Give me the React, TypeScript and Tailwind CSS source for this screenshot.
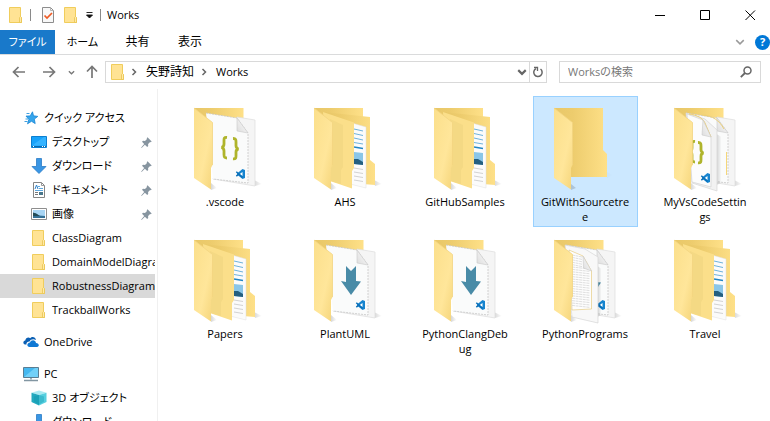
import React, { useId, useState } from "react";

type FolderKind = "empty" | "nested" | "braces" | "bracesStack" | "arrow" | "scriptStack";

/* ---------- small icons ---------- */

function SmallFolder() {
  return (
    <svg width="16" height="16" viewBox="0 0 16 16" className="shrink-0" aria-hidden="true">
      <path d="M1.500.5h11v9l1 1v5h-12z" fill="#ffe394" stroke="#f0cd5c" />
      <path d="M11.500 15.500v-5l1-1 1 1v5z" fill="#ffeaa8" stroke="#e9c451" strokeWidth=".8" />
    </svg>
  );
}

function CheckDoc() {
  return (
    <svg width="14" height="16" viewBox="0 0 14 16" aria-hidden="true">
      <path d="M1.500.5h8l3 3v12h-11z" fill="#f8f8f8" stroke="#8d8d8d" />
      <path d="M9.500.5v3h3" fill="none" stroke="#b5b5b5" />
      <path d="M3.500 8.500l2.500 2.500 5-5" fill="none" stroke="#ee5a24" strokeWidth="1.700" />
    </svg>
  );
}

function Chevron({ dir, className = "", w = 1.5 }: { dir: "right" | "down"; className?: string; w?: number }) {
  return (
    <svg width="8" height="8" viewBox="0 0 8 8" className={className} aria-hidden="true">
      <path d={dir === "right" ? "M2.500 1l3 3-3 3" : "M1 2.500l3 3 3-3"} fill="none" stroke="currentColor" strokeWidth={w} />
    </svg>
  );
}

function Arrow({ d }: { d: string }) {
  return (
    <svg width="14" height="14" viewBox="0 0 14 14" aria-hidden="true">
      <path d={d} fill="none" stroke="currentColor" strokeWidth="1.700" />
    </svg>
  );
}

function Pin() {
  return (
    <svg width="11" height="11" viewBox="0 0 11 11" className="shrink-0" aria-hidden="true">
      <path d="M6.500.3l4.200 4.200-1 .8-.6-.2-2 2 .1 2-1 .9-2.300-2.300L.6 10.900l-.4-.4 3-3.400L1 4.800l1-1 2 .2 2-2-.3-.8z" fill="#8795a0" />
    </svg>
  );
}

function QuickStar() {
  return (
    <svg width="16" height="16" viewBox="0 0 16 16" className="shrink-0" aria-hidden="true">
      <path d="M9.500 1.800l1 4 4.300.6-3.500 2.700.9 4.500-3.700-2.300-4 2.500 1.400-4.500L3 6.100l4.200-.2z" fill="#35a5ec" stroke="#1684d3" strokeWidth=".8" />
      <path d="M3.500 3.500h3M2.500 9h2.500M1.500 11.500h3" stroke="#3f9fdf" />
    </svg>
  );
}

function Desktop() {
  return (
    <svg width="16" height="16" viewBox="0 0 16 16" className="shrink-0" aria-hidden="true">
      <path d="M.5 2.500h15v11H.5z" fill="#17a2fa" stroke="#0c7fd0" />
      <path d="M1 11.500L13 3h2v8.500z" fill="#35b3ff" />
      <path d="M1 12.500h14" stroke="#0869b0" />
      <path d="M2 12.500h1M11 12.500h1M13 12.500h1" stroke="#fff" />
    </svg>
  );
}

function Download() {
  return (
    <svg width="16" height="16" viewBox="0 0 16 16" className="shrink-0" aria-hidden="true">
      <path d="M5.500.5h5v8h4.500L8 15.500 1 8.500h4.500z" fill="#3a96e4" stroke="#2b7cc6" strokeWidth=".8" />
    </svg>
  );
}

function DocumentIcon() {
  return (
    <svg width="16" height="16" viewBox="0 0 16 16" className="shrink-0" aria-hidden="true">
      <path d="M2.500.5h8l3 3v12h-11z" fill="#fff" stroke="#858585" />
      <path d="M10.500.5v3h3" fill="none" stroke="#999" />
      <path d="M7 4.500h2M8 6.500h4M4 8.500h8" stroke="#5ea8df" />
      <path d="M4 7l1.500-4L7 7" fill="none" stroke="#3083ca" />
      <path d="M4 10.500h3M4 12.500h3" stroke="#777" />
      <path d="M8 10h4v3H8z" fill="#48768b" />
    </svg>
  );
}

function PictureIcon() {
  return (
    <svg width="16" height="16" viewBox="0 0 16 16" className="shrink-0" aria-hidden="true">
      <path d="M.5 2.500h15v11H.5z" fill="#fff" stroke="#8e8e8e" />
      <path d="M2 4h12v8H2z" fill="#a8d5f4" />
      <path d="M2 7l3 .5 3 2 6 .5v2H2z" fill="#347096" />
      <path d="M2 6.500l3 1 4 2.500H2z" fill="#244c57" />
    </svg>
  );
}

function OneDrive() {
  return (
    <svg width="16" height="16" viewBox="0 0 16 16" className="shrink-0" aria-hidden="true">
      <path d="M3.500 10.500H2C-.2 10-.3 7 2.300 6.500 2.500 4 5.500 2.700 7.200 4.300 9 2 12.500 3 13 6 10 4.500 7.500 5.500 6.600 7.500 4.500 7.400 3.200 8.500 3.500 10.500z" fill="#0a5fb4" />
      <path d="M6.500 13C3.600 13 3.500 9 7 8.500 8 5.300 12.600 5.500 13 9c3 0 4 3.500 1 4z" fill="#0f78d4" />
    </svg>
  );
}

function PcIcon() {
  return (
    <svg width="16" height="16" viewBox="0 0 16 16" className="shrink-0" aria-hidden="true">
      <path d="M.5 1.500h15v10H.5z" fill="#45b8f0" stroke="#5a7d92" />
      <path d="M1 11L12 2h3v9z" fill="#72d0f8" />
      <path d="M7 12h2v1.500H7z" fill="#9ab0bc" />
      <path d="M1 14.500h14" stroke="#8296a2" strokeWidth="1.500" />
    </svg>
  );
}

function CubeIcon() {
  return (
    <svg width="16" height="16" viewBox="0 0 16 16" className="shrink-0" aria-hidden="true">
      <path d="M8 .5l7.500 2.300L8 5 .5 2.800z" fill="#aaeaf2" />
      <path d="M.5 2.800L8 5v10.500L.5 12z" fill="#22a9be" />
      <path d="M15.500 2.800L8 5v10.500l7.500-3.500z" fill="#55cfdf" />
      <path d="M3 6.500L8 5l5 1.500v5l-5 3-5-3z" fill="#0c92ac" opacity=".35" />
    </svg>
  );
}

/* ---------- large folder artwork ---------- */

function VsMark({ x, y }: { x: number; y: number }) {
  return (
    <g transform={`translate(${x} ${y})`}>
      <path d="M6.500 0L9 1v8l-2.500 1L1 5.500v-1z" fill="#1684cf" />
      <path d="M6.500 3v4L3.800 5z" fill="#fff" />
      <path d="M.3 2.800L6.500 8.500M.3 7.200l3-2.500" stroke="#0b70b8" strokeWidth="1.500" />
    </g>
  );
}

function Braces({ x, y, gap }: { x: number; y: number; gap: number }) {
  return (
    <g fill="none" stroke="#afb42b" strokeWidth="2.800" transform={`translate(${x} ${y})`}>
      <path d="M6 1.500C3 1.200 3 2.500 3 4.500v3.500c0 2-.8 3-2.500 3.300C2.200 11.800 3 13 3 15v3.500c0 2 0 3.500 3 3.500" />
      <path transform={`translate(${gap} 1)`} d="M0 1.500c3-.1 3 1.500 3 3.500v3.500c0 2 .8 3 2.500 3.500C3.800 12.300 3 13.300 3 15.300v3.500c0 2 0 3.200-3 3" />
    </g>
  );
}

function Page({ id }: { id: string }) {
  return (
    <g>
      <path d="M60 19l18 3v66l-42-7z" fill="#f5f5f5" stroke="#dcdcdc" strokeWidth=".7" />
      <path d="M29 15l31 5 11 15v50l-35-4z" fill="#fafbfb" />
      <path d="M29 15l31 5 11 15v50l-35-4" fill="none" stroke="#c6c6c6" strokeWidth=".8" strokeDasharray="2 1" />
      <path d="M60 20l11 15-11-2z" fill={`url(#${id}-fold)`} stroke="#c9c9c9" strokeWidth=".6" />
    </g>
  );
}

function FolderArt({ kind }: { kind: FolderKind }) {
  const id = useId().replace(/[^a-zA-Z0-9]/g, "");
  const back = `url(#${id}-back)`;
  const front = `url(#${id}-front)`;
  return (
    <svg width="96" height="96" viewBox="0 0 96 96" aria-hidden="true">
      <defs>
        <linearGradient id={`${id}-back`} x1="0" y1="0" x2="1" y2="0">
          <stop offset="0" stopColor="#e8c768" />
          <stop offset=".35" stopColor="#edcc6d" />
          <stop offset="1" stopColor="#fee088" />
        </linearGradient>
        <linearGradient id={`${id}-front`} x1="0" y1="0" x2="1" y2="1">
          <stop offset="0" stopColor="#fbdf8b" />
          <stop offset=".6" stopColor="#ffe69a" />
          <stop offset="1" stopColor="#f5d57b" />
        </linearGradient>
        <linearGradient id={`${id}-fold`} x1="0" y1="1" x2="1" y2="0">
          <stop offset="0" stopColor="#dcdcdc" />
          <stop offset="1" stopColor="#fff" />
        </linearGradient>
        <linearGradient id={`${id}-shade`} x1="0" y1="0" x2="1" y2="0">
          <stop offset="0" stopColor="#000" stopOpacity=".16" />
          <stop offset="1" stopColor="#000" stopOpacity="0" />
        </linearGradient>
      </defs>

      {kind === "empty" ? (
        <>
          <path d="M70 74l6 3-6 3zM34 86l5 4-5 2z" fill={`url(#${id}-shade)`} />
          <path d="M17 10h49v42l4 4v23H30z" fill={back} />
        </>
      ) : (
        <>
          <path d="M77 82l8 4-7 2z" fill={`url(#${id}-shade)`} />
          <path d="M34 85l6 5-6 2z" fill={`url(#${id}-shade)`} />
          <path d={kind === "nested" ? "M17 10h49v60H30z" : "M17 10h49.500v20H30z"} fill={back} />
        </>
      )}

      {kind === "nested" && (
        <>
          <path d="M26 14l47 5v43l5 4v21l-24-2z" fill={back} />
          <path d="M55 25l14 4v61l-16-4z" fill="#fbfbfb" stroke="#dedede" strokeWidth=".5" />
          <path d="M57 31l9 2M57 35.500l9 2M57 40l9 2M57 44.500l9 1.500" stroke="#6fb3dc" />
          <path d="M57 49l9 1.500" stroke="#2487c5" strokeWidth="1.500" />
          <path d="M57 54l9 1v12l-9-1z" fill="#8ac6e8" />
          <path d="M57 61l4 0 5 3v3l-9-1z" fill="#245f80" />
          <path d="M57 70l9 1.500M57 74l9 1.500M57 78l9 1.500M57 82l9 1.500" stroke="#d2d2d2" />
          <path d="M26 14l31 10.500V70l-2 3v17.500L30 82z" fill="#fbdf8a" />
          <path d="M33 21l13 6v42l-2 3v14l-11-3z" fill="#ecd07a" opacity=".4" />
        </>
      )}
      {kind === "braces" && (
        <>
          <Page id={id} />
          <Braces x={44} y={38} gap={12} />
          <VsMark x={59} y={71} />
        </>
      )}
      {kind === "arrow" && (
        <>
          <Page id={id} />
          <path d="M49 36l5 5 5-5v15l5 .5L54 65 44 51l5 1z" fill="#498ba7" />
          <VsMark x={59} y={70} />
        </>
      )}
      {kind === "bracesStack" && (
        <>
          <Page id={id} />
          <path d="M69.500 54v23" stroke="#f5d779" />
          <path d="M59.500 36l5 3v46l-5 2z" fill={`url(#${id}-shade)`} />
          <path d="M29 15l19 6 12 11v61l-25-8z" fill="#f2f2f2" stroke="#d5d5d5" strokeWidth=".7" />
          <path d="M30 16l16 6 8 17v50l-19-5z" fill="#fcfcfc" stroke="#d2d2d2" strokeWidth=".7" />
          <path d="M32 16c8 1 14 4 16 9l6 14M45 17c11 1 17 5 22 14" fill="none" stroke="#edcf76" />
          <path d="M46 22l8 17-9-2z" fill={`url(#${id}-fold)`} stroke="#c9c9c9" strokeWidth=".6" />
          <Braces x={32} y={42} gap={9} />
          <VsMark x={44} y={75} />
        </>
      )}
      {kind === "scriptStack" && (
        <>
          <Page id={id} />
          <path d="M59 52l5 .5-4 6z" fill="#498ba7" />
          <VsMark x={59} y={70} />
          <path d="M60.500 36l4 3v46l-4 2z" fill={`url(#${id}-shade)`} />
          <path d="M28 15l20 4 13 8v66l-26-6z" fill="#f8f8f8" stroke="#d5d5d5" strokeWidth=".7" />
          <path d="M32 20l14 6 8.500 15v38L35 80z" fill="#fdfdfd" stroke="#e2c56e" strokeWidth=".6" />
          {Array.from({ length: 22 }, (_, i) => (
            <path key={i} d={`M35 ${25 + i * 2.4}l${i < 5 ? 10 : 18} 2`} stroke="#c9c9c9" strokeWidth=".6" strokeDasharray="3 .6" />
          ))}
          <path d="M46 26l8.500 15-8-3z" fill={`url(#${id}-fold)`} stroke="#c9c9c9" strokeWidth=".6" />
        </>
      )}

      <path d="M17 10l18.500 14.500V67L34 70v21.500L17 80z" fill={front} />
      <path d="M17 10l18.500 14.500V67" fill="none" stroke="#f2d480" strokeWidth=".8" />
    </svg>
  );
}

/* ---------- data ---------- */

const folders: { name: string; kind: FolderKind }[] = [
  { name: ".vscode", kind: "braces" },
  { name: "AHS", kind: "nested" },
  { name: "GitHubSamples", kind: "nested" },
  { name: "GitWithSourcetree", kind: "empty" },
  { name: "MyVsCodeSettings", kind: "bracesStack" },
  { name: "Papers", kind: "nested" },
  { name: "PlantUML", kind: "arrow" },
  { name: "PythonClangDebug", kind: "arrow" },
  { name: "PythonPrograms", kind: "scriptStack" },
  { name: "Travel", kind: "nested" },
];

interface NavEntry {
  label: string;
  icon: React.ReactNode;
  pinned?: boolean;
  current?: boolean;
}

interface NavGroup extends NavEntry {
  children: NavEntry[];
}

const groups: NavGroup[] = [
  {
    label: "クイック アクセス",
    icon: <QuickStar />,
    children: [
      { label: "デスクトップ", icon: <Desktop />, pinned: true },
      { label: "ダウンロード", icon: <Download />, pinned: true },
      { label: "ドキュメント", icon: <DocumentIcon />, pinned: true },
      { label: "画像", icon: <PictureIcon />, pinned: true },
      { label: "ClassDiagram", icon: <SmallFolder /> },
      { label: "DomainModelDiagram", icon: <SmallFolder /> },
      { label: "RobustnessDiagram", icon: <SmallFolder />, current: true },
      { label: "TrackballWorks", icon: <SmallFolder /> },
    ],
  },
  { label: "OneDrive", icon: <OneDrive />, children: [] },
  {
    label: "PC",
    icon: <PcIcon />,
    children: [
      { label: "3D オブジェクト", icon: <CubeIcon /> },
      { label: "ダウンロード", icon: <Download /> },
    ],
  },
];

/* ---------- sections ---------- */

function TitleBar() {
  return (
    <header className="flex h-[30px] shrink-0 items-center pl-2">
      <SmallFolder />
      <span className="ml-1.5 h-3 w-px bg-[#8a8a8a]" />
      <button aria-label="プロパティ" className="ml-2.5"><CheckDoc /></button>
      <button aria-label="新しいフォルダー" className="ml-2"><SmallFolder /></button>
      <button aria-label="クイック アクセス ツール バーのカスタマイズ" className="ml-1.5">
        <svg width="9" height="8" viewBox="0 0 9 8" aria-hidden="true">
          <path d="M1.500 1.500h6M1.500 4h6l-3 3z" stroke="#111" fill="#111" strokeWidth=".9" />
        </svg>
      </button>
      <span className="ml-1.5 h-3 w-px bg-[#8a8a8a]" />
      <h1 className="ml-1.5">Works</h1>
      <div className="ml-auto flex gap-[5px]">
        <button aria-label="最小化" className="flex h-7 w-10 items-center justify-center">
          <svg width="11" height="11" viewBox="0 0 11 11"><path d="M0 5.500h10" stroke="#000" /></svg>
        </button>
        <button aria-label="最大化" className="flex h-7 w-10 items-center justify-center">
          <svg width="11" height="11" viewBox="0 0 11 11"><path d="M.5.5h9v9h-9z" fill="none" stroke="#000" /></svg>
        </button>
        <button aria-label="閉じる" className="flex h-7 w-10 items-center justify-center">
          <svg width="11" height="11" viewBox="0 0 11 11"><path d="M.5.5l9.500 9.500M10 .5L.5 10" stroke="#000" /></svg>
        </button>
      </div>
    </header>
  );
}

function RibbonTabs() {
  return (
    <nav aria-label="リボン" className="flex h-[25px] shrink-0 items-stretch border-b border-[#dadbdc]">
      <button className="w-[55px] bg-[#1979ca] text-white">ファイル</button>
      <button className="w-[55px]">ホーム</button>
      <button className="w-[55px] text-xs">共有</button>
      <button className="w-[50px] text-xs">表示</button>
      <div className="ml-auto flex items-center gap-2.5">
        <button aria-label="リボンの展開" className="text-[#9a9a9a]"><Chevron dir="down" className="size-2.5" w={1.2} /></button>
        <button aria-label="ヘルプ" className="flex size-[15px] items-center justify-center rounded-full bg-[#0078d7] font-bold text-white">?</button>
      </div>
    </nav>
  );
}

function AddressRow() {
  return (
    <div className="flex h-[34px] shrink-0 items-center pl-3 pr-[9px] text-[#777]">
      <button aria-label="戻る"><Arrow d="M13 7H2M6.500 2L1.500 7l5 5" /></button>
      <button aria-label="進む" className="ml-4"><Arrow d="M1 7h11M7.500 2l5 5-5 5" /></button>
      <button aria-label="最近表示した場所" className="ml-3"><Chevron dir="down" className="size-[7px]" /></button>
      <button aria-label="上へ" className="ml-2.5"><Arrow d="M7 13V2M2 6.500l5-5 5 5" /></button>
      <div className="ml-1.5 flex h-[22px] min-w-0 flex-1 items-center border border-[#d9d9d9] pl-1 text-black">
        <SmallFolder />
        <Chevron dir="right" className="ml-1 text-[#666]" />
        <button className="ml-2 text-xs">矢野詩知</button>
        <Chevron dir="right" className="ml-1.5 text-[#666]" />
        <button className="ml-2">Works</button>
        <button aria-label="以前の場所" className="ml-auto mr-0.5 text-[#666]"><Chevron dir="down" className="size-2.5" w={1.7} /></button>
        <button aria-label="最新の情報に更新" className="flex h-full w-[17px] items-center justify-center border-l border-[#d9d9d9] text-[#666]">
          <svg width="12" height="12" viewBox="0 0 12 12" aria-hidden="true">
            <path d="M8.500 3A4.200 4.200 0 1 1 4 2.600" fill="none" stroke="currentColor" strokeWidth="1.500" />
            <path d="M2 1.500h3.500V5" fill="none" stroke="currentColor" strokeWidth="1.300" />
          </svg>
        </button>
      </div>
      <label className="ml-3 flex h-[22px] w-[202px] items-center border border-[#d9d9d9] pl-2 pr-2">
        <input
          type="search"
          aria-label="Worksの検索"
          placeholder="Worksの検索"
          className="min-w-0 flex-1 bg-transparent outline-none placeholder:text-[#777]"
        />
        <svg width="12" height="12" viewBox="0 0 12 12" aria-hidden="true">
          <circle cx="7.500" cy="4.500" r="3.500" fill="none" stroke="#666" strokeWidth="1.500" />
          <path d="M5 7L.8 11.200" stroke="#666" strokeWidth="1.800" />
        </svg>
      </label>
    </div>
  );
}

function NavChild({ entry }: { entry: NavEntry }) {
  return (
    <li>
      <button
        aria-current={entry.current ? "page" : undefined}
        className={`flex h-6 w-full items-center gap-[5px] pl-[31px] text-left ${entry.current ? "bg-[#d9d9d9]" : ""}`}
      >
        {entry.icon}
        <span className="min-w-0 flex-1 overflow-hidden whitespace-nowrap">{entry.label}</span>
        {entry.pinned && <span className="pr-[3px]"><Pin /></span>}
      </button>
    </li>
  );
}

function Sidebar() {
  return (
    <nav aria-label="ナビゲーション" className="w-[158px] shrink-0 overflow-hidden border-r border-[#f0f0f0] pr-0.5 pt-[17px]">
      <ul className="flex flex-col gap-2">
        {groups.map((group) => (
          <li key={group.label}>
            <button className="flex h-6 w-full items-center gap-[5px] pl-[23px] text-left whitespace-nowrap">
              {group.icon}
              {group.label}
            </button>
            {group.children.length > 0 && (
              <ul>
                {group.children.map((child) => (
                  <NavChild key={child.label} entry={child} />
                ))}
              </ul>
            )}
          </li>
        ))}
      </ul>
    </nav>
  );
}

function FolderGrid() {
  const [selected, setSelected] = useState("GitWithSourcetree");
  return (
    <main className="min-w-0 flex-1 overflow-hidden pl-[7px] pt-[7px]">
      <ul className="grid grid-cols-[repeat(auto-fill,120px)] gap-y-px">
        {folders.map((folder) => (
          <li key={folder.name} className="flex justify-center">
            <button
              aria-pressed={selected === folder.name}
              onClick={() => setSelected(folder.name)}
              className={`flex w-[105px] flex-col items-center border pt-px pb-0.5 ${
                selected === folder.name ? "border-[#99d1ff] bg-[#cce8ff]" : "border-transparent"
              }`}
            >
              <FolderArt kind={folder.kind} />
              <span className="w-full px-[7px] text-center leading-[15px] break-all">{folder.name}</span>
            </button>
          </li>
        ))}
      </ul>
    </main>
  );
}

export default function App() {
  return (
    <div className="flex h-screen flex-col overflow-hidden bg-white font-['Open_Sans','Noto_Sans_CJK_JP',sans-serif] text-[11px] leading-4 text-black [font-feature-settings:'palt']">
      <TitleBar />
      <RibbonTabs />
      <AddressRow />
      <div className="flex min-h-0 flex-1">
        <Sidebar />
        <FolderGrid />
      </div>
    </div>
  );
}
